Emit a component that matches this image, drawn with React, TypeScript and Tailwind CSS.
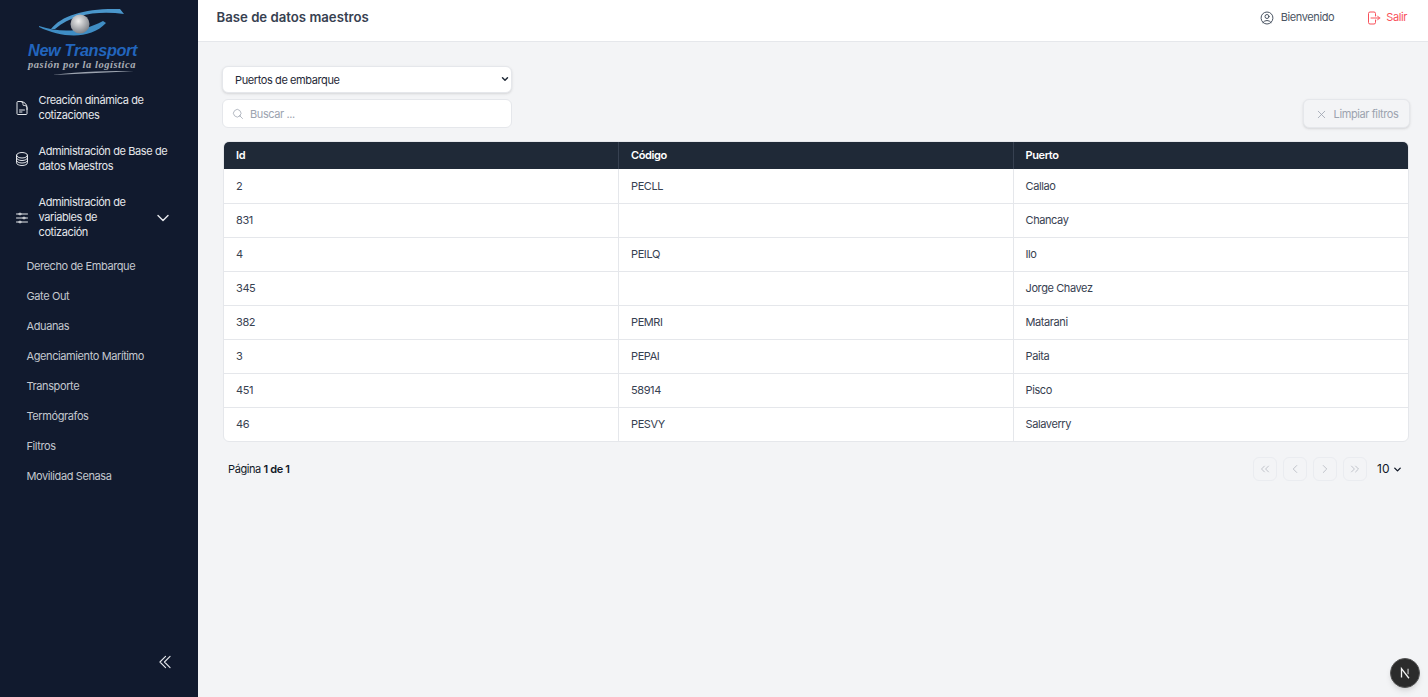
import { useState } from "react";
import { ChevronDown, ChevronLeft, ChevronRight, ChevronsLeft, ChevronsRight } from "lucide-react";
import {
  HiOutlineAdjustmentsHorizontal,
  HiOutlineArrowRightOnRectangle,
  HiOutlineChevronDoubleLeft,
  HiOutlineCircleStack,
  HiOutlineDocumentText,
  HiOutlineMagnifyingGlass,
  HiOutlineUserCircle,
  HiOutlineXMark,
} from "react-icons/hi2";

const SUB_ITEMS = [
  "Derecho de Embarque",
  "Gate Out",
  "Aduanas",
  "Agenciamiento Marítimo",
  "Transporte",
  "Termógrafos",
  "Filtros",
  "Movilidad Senasa",
];

const ROWS = [
  { id: 2, code: "PECLL", port: "Callao" },
  { id: 831, code: "", port: "Chancay" },
  { id: 4, code: "PEILQ", port: "Ilo" },
  { id: 345, code: "", port: "Jorge Chavez" },
  { id: 382, code: "PEMRI", port: "Matarani" },
  { id: 3, code: "PEPAI", port: "Paita" },
  { id: 451, code: "58914", port: "Pisco" },
  { id: 46, code: "PESVY", port: "Salaverry" },
];

function Logo() {
  return (
    <div className="ml-[28px] flex h-[78px] w-[110px] flex-col tracking-normal">
      <svg viewBox="0 0 90 32" className="ml-[10px] mt-[7px] h-[32px] w-[90px] shrink-0">
        <defs>
          <radialGradient id="ball" cx="0.42" cy="0.35" r="0.7">
            <stop offset="0" stopColor="#eeeeee" />
            <stop offset="1" stopColor="#777b82" />
          </radialGradient>
        </defs>
        <path d="M13 22 C24 8 48 1 82 2 L86 7 C62 4 36 6 17 22 Z" fill="#4a96cb" />
        <path d="M1 19 C26 27 46 24 65 14 L68 16 C52 33 24 31 1 20 Z" fill="#3f8dc4" />
        <circle cx="42" cy="17" r="9.5" fill="url(#ball)" />
      </svg>
      <span className="mt-[3px] h-[16px] text-[16.3px] leading-[16px] font-bold italic tracking-[-0.35px] whitespace-nowrap text-[#2265bd] [font-family:'Liberation_Sans',sans-serif]">
        New Transport
      </span>
      <span className="mt-[1px] text-[10.5px] leading-[12px] italic font-bold whitespace-nowrap text-[#a9adb4] tracking-[0.55px] [font-family:'Liberation_Serif',serif]">
        pasión por la logística
      </span>
      <svg viewBox="0 0 82 4" className="ml-[24px] h-[4px] w-[82px] shrink-0">
        <path d="M0 4 C30 0 60 0 82 0 C60 1.5 30 2.5 0 4 Z" fill="#9ca3af" />
      </svg>
    </div>
  );
}

function NavItem({
  icon,
  label,
  chevron,
}: {
  icon: React.ReactNode;
  label: React.ReactNode;
  chevron?: boolean;
}) {
  return (
    <div className="flex items-center pl-[13.5px] pr-[25.5px] leading-[15px] text-[#e5e7eb]">
      <span className="w-[25px] shrink-0">{icon}</span>
      <span className="flex-1">{label}</span>
      {chevron && <ChevronDown className="h-[20px] w-[20px] text-[#e5e7eb]" strokeWidth={1.7} />}
    </div>
  );
}

function PageButton({ children }: { children: React.ReactNode }) {
  return (
    <button
      disabled
      className="flex h-6 w-6 items-center justify-center rounded-md border border-[#eaecf0] text-[#b8bcc4]"
    >
      {children}
    </button>
  );
}

export default function App() {
  const [tipo, setTipo] = useState("puertos");

  return (
    <div className="relative flex h-screen w-full overflow-hidden bg-[#f3f4f6] font-['Inter',sans-serif] text-[11px] tracking-[-0.4px] text-[#374151]">
      {/* Sidebar */}
      <aside className="flex w-[198px] shrink-0 flex-col bg-[#111a2e]">
        <Logo />

        <nav className="mt-[15px] flex flex-col gap-[21px]">
          <NavItem
            icon={<HiOutlineDocumentText className="h-4 w-4" />}
            label={
              <>
                Creación dinámica de
                <br />
                cotizaciones
              </>
            }
          />
          <NavItem
            icon={<HiOutlineCircleStack className="h-4 w-4" />}
            label={
              <>
                Administración de Base de
                <br />
                datos Maestros
              </>
            }
          />
          <NavItem
            icon={<HiOutlineAdjustmentsHorizontal className="h-4 w-4" />}
            label={
              <>
                Administración de
                <br />
                variables de
                <br />
                cotización
              </>
            }
            chevron
          />
        </nav>

        <ul className="mt-[11px] flex flex-col">
          {SUB_ITEMS.map((item) => (
            <li key={item} className="flex h-[30.1px] items-center pl-[26.5px] text-[#c4c8cf]">
              {item}
            </li>
          ))}
        </ul>

        <div className="mt-auto flex justify-end pr-[24px] pb-[26px]">
          <HiOutlineChevronDoubleLeft className="h-[18px] w-[18px] text-[#e5e7eb]" />
        </div>
      </aside>

      {/* Main */}
      <main className="flex min-w-0 flex-1 flex-col">
        <header className="flex h-[42px] shrink-0 items-center justify-between border-b border-[#e5e7eb] bg-white pb-[6px] pl-[18.5px] pr-[21px]">
          <h1 className="text-[13.2px] font-semibold tracking-normal text-[#374151]">Base de datos maestros</h1>
          <div className="flex items-center">
            <HiOutlineUserCircle className="h-4 w-4 text-[#4b5563]" />
            <span className="ml-[6px] text-[#4b5563]">Bienvenido</span>
            <HiOutlineArrowRightOnRectangle className="ml-[31px] h-4 w-4 text-[#f9505a]" />
            <span className="ml-[5px] text-[#f9505a]">Salir</span>
          </div>
        </header>

        <section className="flex flex-col pl-[24px] pr-[18px] pt-[24px]">
          <div className="relative w-[290px]">
            <select
              value={tipo}
              onChange={(e) => setTipo(e.target.value)}
              className="h-[27px] w-full appearance-none rounded-md border border-[#e5e7eb] bg-white pl-[12px] pt-[2px] text-[11px] tracking-[-0.4px] text-[#1f2937] shadow-sm"
            >
              <option value="puertos">Puertos de embarque</option>
              <option value="aeropuertos">Aeropuertos</option>
            </select>
            <ChevronDown
              className="pointer-events-none absolute right-[2px] top-[8px] h-[10px] w-[10px] text-[#1f2937]"
              strokeWidth={3.5}
            />
          </div>

          <div className="mt-[6px] flex items-center justify-between">
            <div className="flex h-[29px] w-[290px] items-center rounded-md border border-[#e5e7eb] bg-white pl-[9px]">
              <HiOutlineMagnifyingGlass className="h-[12px] w-[12px] text-[#9ca3af]" />
              <input
                placeholder="Buscar ..."
                className="ml-[6px] flex-1 bg-transparent pt-[1px] text-[11px] tracking-[-0.4px] outline-none placeholder:text-[#9ca3af]"
              />
            </div>
            <button
              disabled
              className="flex h-[29px] w-[107px] items-center justify-center rounded-md border border-[#e5e7eb] bg-[#f3f4f6] pt-[1px] text-[#9ca3af] shadow-sm"
            >
              <HiOutlineXMark className="h-[13px] w-[13px]" />
              <span className="ml-[6px]">Limpiar filtros</span>
            </button>
          </div>

          <div className="ml-[1px] mr-[1px] mt-[13px] overflow-hidden rounded-md border border-[#e5e7eb] bg-white">
            <table className="w-full table-fixed border-collapse text-left">
              <thead>
                <tr className="h-[27px] bg-[#1f2937] text-white">
                  <th className="w-[394.5px] border-r border-[#374151] pl-[12px] font-semibold">Id</th>
                  <th className="w-[394.5px] border-r border-[#374151] pl-[12px] font-semibold">Código</th>
                  <th className="pl-[12px] font-semibold">Puerto</th>
                </tr>
              </thead>
              <tbody>
                {ROWS.map((row) => (
                  <tr key={row.id} className="h-[34px] border-b border-[#e5e7eb] last:border-b-0">
                    <td className="border-r border-[#e5e7eb] pl-[12px]">{row.id}</td>
                    <td className="border-r border-[#e5e7eb] pl-[12px]">{row.code}</td>
                    <td className="pl-[12px]">{row.port}</td>
                  </tr>
                ))}
              </tbody>
            </table>
          </div>

          <div className="mt-[15px] flex items-center justify-between pl-[6px]">
            <span className="text-[#111827]">
              Página <strong className="font-semibold">1 de 1</strong>
            </span>
            <div className="flex items-center gap-[6px]">
              <PageButton>
                <ChevronsLeft className="h-[14px] w-[14px]" strokeWidth={1.5} />
              </PageButton>
              <PageButton>
                <ChevronLeft className="h-[14px] w-[14px]" strokeWidth={1.5} />
              </PageButton>
              <PageButton>
                <ChevronRight className="h-[14px] w-[14px]" strokeWidth={1.5} />
              </PageButton>
              <PageButton>
                <ChevronsRight className="h-[14px] w-[14px]" strokeWidth={1.5} />
              </PageButton>
              <span className="ml-[4px] flex w-[33px] items-center gap-[3px] text-[12px] tracking-normal text-[#111827]">
                10
                <ChevronDown className="h-[11px] w-[11px]" strokeWidth={3} />
              </span>
            </div>
          </div>
        </section>
      </main>

      {/* Next dev indicator */}
      <div className="absolute bottom-[9px] right-[8px] flex h-[30px] w-[30px] items-center justify-center rounded-full border border-[#555] bg-[#2b2b2b] shadow-md">
        <svg viewBox="0 0 16 16" className="h-[14px] w-[14px]">
          <path d="M4 13V3l8.5 11" fill="none" stroke="#f5f5f5" strokeWidth="1.5" />
          <path d="M11.5 3v6.5" fill="none" stroke="#bbb" strokeWidth="1.5" />
        </svg>
      </div>
    </div>
  );
}
